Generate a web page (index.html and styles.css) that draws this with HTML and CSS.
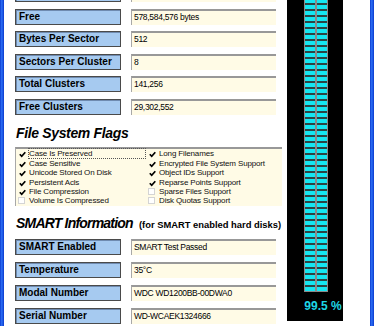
FILE: index.html
```html
<!DOCTYPE html>
<html>
<head>
<meta charset="utf-8">
<link rel="stylesheet" href="styles.css">
</head>
<body>
<div class="window">
  <div class="frame"></div>
  <div class="content">
    <div class="left">
      <div class="row"><div class="label"></div><div class="value"></div></div>
      <div class="row"><div class="label">Free</div><div class="value">578,584,576 bytes</div></div>
      <div class="row"><div class="label">Bytes Per Sector</div><div class="value">512</div></div>
      <div class="row"><div class="label">Sectors Per Cluster</div><div class="value">8</div></div>
      <div class="row"><div class="label">Total Clusters</div><div class="value">141,256</div></div>
      <div class="row"><div class="label">Free Clusters</div><div class="value">29,302,552</div></div>

      <h2 class="heading">File System Flags</h2>
      <div class="flags">
        <div class="flag"><span class="box on"><svg viewBox="0 0 7 7"><path d="M0.8 3.2 L2.7 5.3 L6.3 1.2"/></svg></span><span class="ft focus">Case Is Preserved</span></div>
        <div class="flag"><span class="box on"><svg viewBox="0 0 7 7"><path d="M0.8 3.2 L2.7 5.3 L6.3 1.2"/></svg></span><span class="ft">Long Filenames</span></div>
        <div class="flag"><span class="box on"><svg viewBox="0 0 7 7"><path d="M0.8 3.2 L2.7 5.3 L6.3 1.2"/></svg></span><span class="ft">Case Sensitive</span></div>
        <div class="flag"><span class="box on"><svg viewBox="0 0 7 7"><path d="M0.8 3.2 L2.7 5.3 L6.3 1.2"/></svg></span><span class="ft">Encrypted File System Support</span></div>
        <div class="flag"><span class="box on"><svg viewBox="0 0 7 7"><path d="M0.8 3.2 L2.7 5.3 L6.3 1.2"/></svg></span><span class="ft">Unicode Stored On Disk</span></div>
        <div class="flag"><span class="box on"><svg viewBox="0 0 7 7"><path d="M0.8 3.2 L2.7 5.3 L6.3 1.2"/></svg></span><span class="ft">Object IDs Support</span></div>
        <div class="flag"><span class="box on"><svg viewBox="0 0 7 7"><path d="M0.8 3.2 L2.7 5.3 L6.3 1.2"/></svg></span><span class="ft">Persistent Acls</span></div>
        <div class="flag"><span class="box on"><svg viewBox="0 0 7 7"><path d="M0.8 3.2 L2.7 5.3 L6.3 1.2"/></svg></span><span class="ft">Reparse Points Support</span></div>
        <div class="flag"><span class="box on"><svg viewBox="0 0 7 7"><path d="M0.8 3.2 L2.7 5.3 L6.3 1.2"/></svg></span><span class="ft">File Compression</span></div>
        <div class="flag"><span class="box"></span><span class="ft">Sparse Files Support</span></div>
        <div class="flag"><span class="box"></span><span class="ft">Volume Is Compressed</span></div>
        <div class="flag"><span class="box"></span><span class="ft">Disk Quotas Support</span></div>
      </div>

      <h2 class="heading smart">SMART Information <span class="note">(for SMART enabled hard disks)</span></h2>
      <div class="row s"><div class="label">SMART Enabled</div><div class="value">SMART Test Passed</div></div>
      <div class="row s"><div class="label">Temperature</div><div class="value">35°C</div></div>
      <div class="row s"><div class="label">Modal Number</div><div class="value">WDC WD1200BB-00DWA0</div></div>
      <div class="row s"><div class="label">Serial Number</div><div class="value">WD-WCAEK1324666</div></div>
    </div>
    <div class="meter">
      <div class="bars"><div class="col"></div><div class="col"></div></div>
      <div class="pct">99.5 %</div>
    </div>
  </div>
  <div class="frame"></div>
</div>
</body>
</html>
```
FILE: styles.css
```css
html, body {
  margin: 0;
  padding: 0;
}
body {
  width: 374px;
  height: 326px;
  overflow: hidden;
  background: #fff;
  font-family: "Liberation Sans", Arial, sans-serif;
}
.window {
  display: flex;
  height: 326px;
}
.frame {
  width: 4px;
  flex: none;
  background: linear-gradient(to right, #0b3ad0, #2b6cf2 40%, #1c56e6 70%, #0a38c8);
}
.content {
  flex: 1;
  display: flex;
  background: #fff;
  overflow: hidden;
}
.left {
  width: 269px;
  padding-left: 11px;
  margin-top: -14px;
  flex: none;
}
.row {
  display: flex;
  gap: 10px;
  height: 16px;
  margin-bottom: 6.5px;
}
.row.s {
  margin-bottom: 7px;
}
.label {
  width: 106px;
  box-sizing: border-box;
  border: 1px solid #4a4a4a;
  box-shadow: inset 1px 1px 0 #6f8bb0;
  background: #a6caf0;
  font-weight: bold;
  font-size: 10px;
  line-height: 14px;
  padding-left: 3px;
  color: #000;
  white-space: nowrap;
}
.value {
  width: 145px;
  box-sizing: border-box;
  background: #fffbe6;
  border-top: 2px solid #989898;
  border-left: 1px solid #a8a8a8;
  font-size: 8.5px;
  letter-spacing: -0.3px;
  line-height: 13px;
  padding-left: 2px;
  color: #000;
  white-space: nowrap;
}
.heading {
  margin: 10.5px 0 0;
  font-size: 14px;
  line-height: 16px;
  font-weight: bold;
  font-style: italic;
  letter-spacing: -0.35px;
  padding-left: 1px;
  color: #000;
  white-space: nowrap;
}
.heading.smart {
  margin: 9.3px 0 5.5px;
  letter-spacing: -0.8px;
}
.note {
  font-style: normal;
  font-size: 9.4px;
  letter-spacing: 0;
  margin-left: 3px;
}
.flags {
  margin-top: 6px;
  width: 267px;
  height: 59px;
  box-sizing: border-box;
  background: #fffbe6;
  border-top: 2px solid #989898;
  border-left: 1px solid #a8a8a8;
  display: grid;
  grid-template-columns: 130px 1fr;
  grid-auto-rows: 9.4px;
  padding-top: 0.3px;
}
.flag {
  display: flex;
  align-items: center;
  font-size: 8px;
  letter-spacing: -0.15px;
  color: #111;
  white-space: nowrap;
}
.box {
  width: 7px;
  height: 7px;
  box-sizing: border-box;
  margin-left: 2px;
  margin-right: 4px;
  background: #fff;
  border: 1px solid #d4d4d4;
  flex: none;
  display: flex;
}
.box.on {
  background: transparent;
  border-color: transparent;
}
.box svg {
  width: 7px;
  height: 7px;
  overflow: visible;
}
.box path {
  fill: none;
  stroke: #000;
  stroke-width: 1.7;
}
.ft {
  line-height: 9px;
}
.ft.focus {
  outline: 1px dotted #555;
  flex: 1;
  margin-right: 1px;
}
.meter {
  margin-left: 3px;
  width: 56px;
  height: 321px;
  background: #000;
  flex: none;
  display: flex;
  flex-direction: column;
}
.bars {
  display: flex;
  margin-left: 17px;
  height: 292px;
}
.col {
  width: 12px;
  box-sizing: border-box;
  border: 1px solid #8a8a8a;
  border-top: none;
  background: repeating-linear-gradient(to top, #14e6f2 0, #14e6f2 4px, #2b4444 4px, #2b4444 6px);
}
.pct {
  margin-top: 7px;
  text-align: center;
  padding-left: 16px;
  color: #1ed6e6;
  font-weight: bold;
  font-size: 12px;
  line-height: 14px;
}
```
